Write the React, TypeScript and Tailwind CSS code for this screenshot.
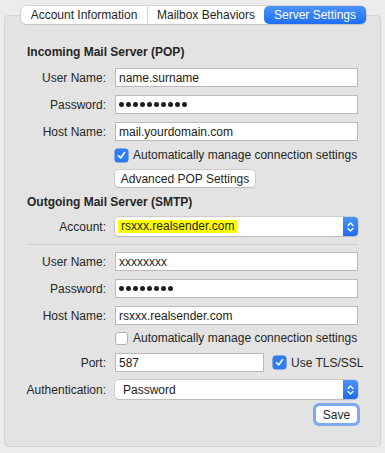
import React from "react";

const font = { fontFamily: '"Liberation Sans", Arial, sans-serif' };

function Label({ children }: { children: React.ReactNode }) {
  return (
    <div className="w-[110px] pr-[9px] text-right text-[12px] text-[#262626] shrink-0">
      {children}
    </div>
  );
}

function TextInput({ children, w = "w-[243px]" }: { children: React.ReactNode; w?: string }) {
  return (
    <div
      className={`${w} h-[19px] bg-white border border-[#b9b9b9] flex items-center pl-[3px] text-[12px] text-[#1c1c1c]`}
    >
      {children}
    </div>
  );
}

function Dots({ n }: { n: number }) {
  return (
    <div className="flex items-center gap-[2px]">
      {Array.from({ length: n }).map((_, i) => (
        <div key={i} className="w-[5px] h-[5px] rounded-full bg-[#1e1e1e]" />
      ))}
    </div>
  );
}

function Check({ checked }: { checked: boolean }) {
  if (checked) {
    return (
      <div className="w-[13px] h-[13px] rounded-[3px] bg-[#2d7df6] flex items-center justify-center shadow-[0_0_0_0.5px_#2a6fd9]">
        <svg width="9" height="9" viewBox="0 0 9 9">
          <path d="M1.5 4.8 L3.6 7 L7.6 1.6" fill="none" stroke="white" strokeWidth="1.6" strokeLinecap="round" strokeLinejoin="round" />
        </svg>
      </div>
    );
  }
  return <div className="w-[13px] h-[13px] rounded-[3px] bg-white border border-[#b0b0b0]" />;
}

function Stepper() {
  return (
    <div className="w-[15px] h-full rounded-r-[4px] bg-gradient-to-b from-[#4a93f9] to-[#1d6cf3] flex items-center justify-center">
      <svg width="9" height="12" viewBox="0 0 9 12">
        <path d="M2 4.5 L4.5 2 L7 4.5" fill="none" stroke="white" strokeWidth="1.3" strokeLinecap="round" strokeLinejoin="round" />
        <path d="M2 7.5 L4.5 10 L7 7.5" fill="none" stroke="white" strokeWidth="1.3" strokeLinecap="round" strokeLinejoin="round" />
      </svg>
    </div>
  );
}

function Select({ children }: { children: React.ReactNode }) {
  return (
    <div className="w-[243px] h-[19px] bg-white rounded-[4px] shadow-[0_0_0_0.5px_#b5b5b5,0_1px_1px_rgba(0,0,0,0.15)] flex items-center justify-between">
      <div className="flex items-center pl-[3px] text-[12px] text-[#1c1c1c]">{children}</div>
      <Stepper />
    </div>
  );
}

function Row({ label, children, mt }: { label: string; children: React.ReactNode; mt: string }) {
  return (
    <div className={`flex items-center ${mt}`}>
      <Label>{label}</Label>
      {children}
    </div>
  );
}

export default function App() {
  return (
    <div className="w-[385px] h-[453px] bg-[#ececec] flex flex-col" style={font}>
      <div className="relative z-10 mt-[6px] ml-[21px] flex h-[18px] w-fit rounded-[5px] bg-white shadow-[0_0_0_0.5px_#bdbdbd,0_1px_1px_rgba(0,0,0,0.12)] text-[12px] text-[#1f1f1f]">
        <div className="w-[127px] flex items-center justify-center border-r border-[#d6d6d6]">Account Information</div>
        <div className="w-[116px] flex items-center justify-center">Mailbox Behaviors</div>
        <div className="w-[102px] flex items-center justify-center rounded-[5px] bg-gradient-to-b from-[#4b93f8] to-[#1f6ef4] text-white">
          Server Settings
        </div>
      </div>
      <div className="mx-[4px] -mt-[9px] h-[432px] rounded-[4px] bg-[#e3e3e3] border border-[#d4d4d4] flex flex-col">
        <div className="mt-[28px] ml-[22px] h-[16px] flex items-center text-[12px] font-bold text-[#262626]">
          Incoming Mail Server (POP)
        </div>
        <Row label="User Name:" mt="mt-[8px]">
          <TextInput>name.surname</TextInput>
        </Row>
        <Row label="Password:" mt="mt-[8px]">
          <TextInput>
            <Dots n={10} />
          </TextInput>
        </Row>
        <Row label="Host Name:" mt="mt-[8px]">
          <TextInput>mail.yourdomain.com</TextInput>
        </Row>
        <div className="mt-[6px] ml-[110px] h-[16px] flex items-center gap-[5px] text-[12px] text-[#262626]">
          <Check checked />
          <span>Automatically manage connection settings</span>
        </div>
        <div className="mt-[7px] ml-[110px] w-[140px] h-[17px] rounded-[4px] bg-white shadow-[0_0_0_0.5px_#b5b5b5,0_1px_1px_rgba(0,0,0,0.15)] flex items-center justify-center text-[12px] text-[#1f1f1f]">
          Advanced POP Settings
        </div>
        <div className="mt-[7px] ml-[22px] h-[16px] flex items-center text-[12px] font-bold text-[#262626]">
          Outgoing Mail Server (SMTP)
        </div>
        <Row label="Account:" mt="mt-[7px]">
          <Select>
            <span className="bg-[#ffff00] px-[3px] leading-[13px]">rsxxx.realsender.com</span>
          </Select>
        </Row>
        <div className="mt-[8px] ml-[22px] w-[331px] h-px bg-[#cfcfcf]" />
        <Row label="User Name:" mt="mt-[7px]">
          <TextInput>xxxxxxxx</TextInput>
        </Row>
        <Row label="Password:" mt="mt-[8px]">
          <TextInput>
            <Dots n={8} />
          </TextInput>
        </Row>
        <Row label="Host Name:" mt="mt-[8px]">
          <TextInput>rsxxx.realsender.com</TextInput>
        </Row>
        <div className="mt-[5px] ml-[110px] h-[16px] flex items-center gap-[5px] text-[12px] text-[#262626]">
          <Check checked={false} />
          <span>Automatically manage connection settings</span>
        </div>
        <Row label="Port:" mt="mt-[7px]">
          <TextInput w="w-[149px]">587</TextInput>
          <div className="ml-[9px] flex items-center gap-[5px] text-[12px] text-[#262626]">
            <Check checked />
            <span>Use TLS/SSL</span>
          </div>
        </Row>
        <Row label="Authentication:" mt="mt-[8px]">
          <Select>
            <span className="pl-[5px]">Password</span>
          </Select>
        </Row>
        <div className="mt-[4px] flex justify-end pr-[20px]">
          <div className="w-[47px] h-[23px] rounded-[6px] bg-[#7ea9ec] p-[3px]">
            <div className="w-full h-full rounded-[4px] bg-white flex items-center justify-center text-[12px] text-[#1f1f1f]">
              Save
            </div>
          </div>
        </div>
      </div>
    </div>
  );
}
